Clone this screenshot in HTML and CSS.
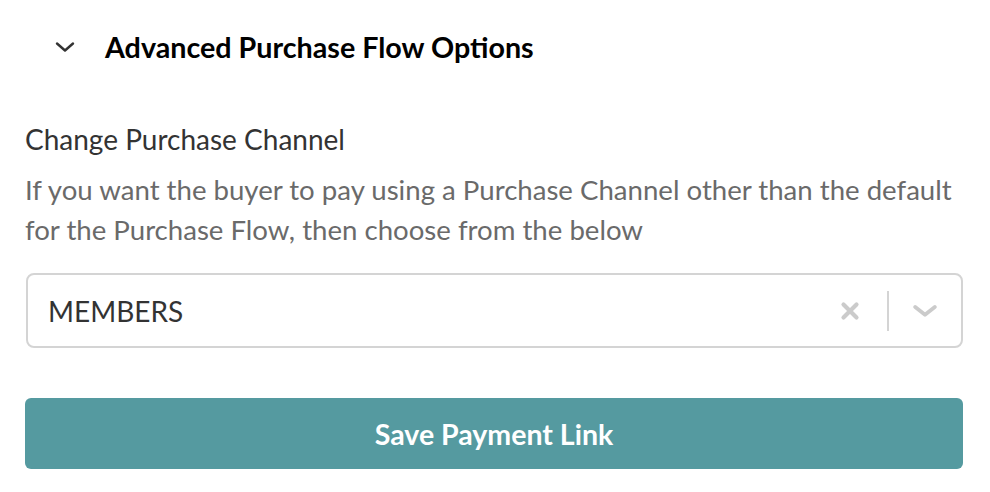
FILE: index.html
```html
<!DOCTYPE html>
<html>
<head>
<meta charset="utf-8">
<link rel="stylesheet" href="styles.css">
</head>
<body>
<div class="page">
  <div class="section-head">
    <svg class="head-chevron" width="20" height="12" viewBox="0 0 20 12"><path d="M2 2.5 L10 9.5 L18 2.5" fill="none" stroke="#333" stroke-width="2.4" stroke-linecap="round" stroke-linejoin="round"/></svg>
    <h2 class="section-title">Advanced Purchase Flow Options</h2>
  </div>
  <div class="field">
    <div class="field-label">Change Purchase Channel</div>
    <p class="field-help">If you want the buyer to pay using a Purchase Channel other than the default for the Purchase Flow, then choose from the below</p>
    <div class="select">
      <div class="select-value">MEMBERS</div>
      <div class="select-indicators">
        <svg class="clear-icon" width="20" height="20" viewBox="0 0 20 20"><path d="M3.5 3.5 L16.5 16.5 M16.5 3.5 L3.5 16.5" stroke="#cbcbcb" stroke-width="4.2" stroke-linecap="round"/></svg>
        <span class="sep"></span>
        <svg class="drop-icon" width="24" height="14" viewBox="0 0 24 14"><path d="M2.2 3 L12 10.8 L21.8 3" fill="none" stroke="#cbcbcb" stroke-width="3.8" stroke-linecap="round" stroke-linejoin="round"/></svg>
      </div>
    </div>
  </div>
  <button class="save-btn">Save Payment Link</button>
</div>
</body>
</html>
```
FILE: styles.css
```css
html, body { margin: 0; padding: 0; background: #fff; }
body { font-family: Lato, "Noto Sans", sans-serif; color: #333; }
.page { width: 938px; padding: 0 0 0 25px; }
.section-head { display: flex; align-items: center; height: 94px; padding-left: 30px; }
.head-chevron { margin-right: 30px; }
.section-title { margin: 0; font-size: 28.7px; font-weight: 700; color: #000; }
.field { padding-top: 28px; }
.field-label { font-size: 28px; line-height: 34px; color: #333; }
.field-help { margin: 14px 0 0; font-size: 27.6px; line-height: 40px; color: #6a6a6a; }
.select { margin-top: 23px; margin-left: 1px; height: 75px; box-sizing: border-box; border: 2px solid #d4d4d4; border-radius: 8px; display: flex; align-items: center; justify-content: space-between; padding-left: 20px; padding-right: 24px; }
.select-value { font-size: 28px; color: #333; }
.select-indicators { display: flex; align-items: center; }
.clear-icon { margin-right: 27px; }
.sep { width: 2px; height: 40px; background: #d4d4d4; margin-right: 24px; }
.save-btn { display: block; margin-top: 50px; width: 938px; height: 71px; border: none; border-radius: 6px; background: #559aa0; color: #fff; font-family: Lato, sans-serif; font-size: 28.5px; font-weight: 700; }
```
